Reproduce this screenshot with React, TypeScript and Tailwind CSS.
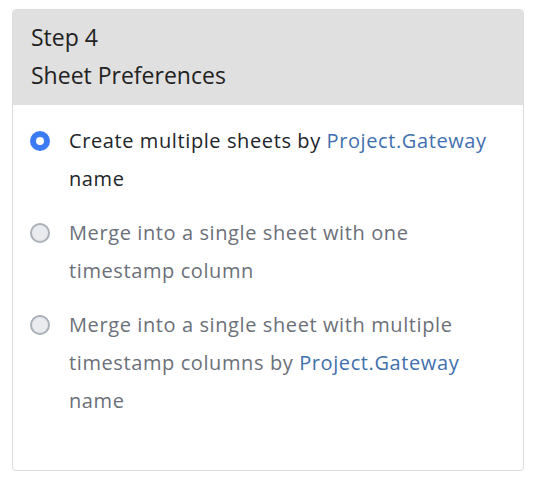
const FONT = "font-['Open_Sans',sans-serif]";

type Option = {
  id: string;
  checked?: boolean;
  parts: { text: string; link?: boolean }[];
};

const options: Option[] = [
  {
    id: "multiple",
    checked: true,
    parts: [
      { text: "Create multiple sheets by " },
      { text: "Project.Gateway", link: true },
      { text: " name" },
    ],
  },
  {
    id: "single",
    parts: [{ text: "Merge into a single sheet with one timestamp column" }],
  },
  {
    id: "single-multi",
    parts: [
      { text: "Merge into a single sheet with multiple timestamp columns by " },
      { text: "Project.Gateway", link: true },
      { text: " name" },
    ],
  },
];

function Radio({ checked }: { checked?: boolean }) {
  if (checked) {
    return (
      <span className="mt-[9px] grid size-5 shrink-0 place-items-center rounded-full bg-[#3b7cf5]">
        <span className="size-2 rounded-full bg-white" />
      </span>
    );
  }
  return (
    <span className="mt-[9px] size-5 shrink-0 rounded-full border-2 border-[#aab0b8] bg-[#e9ebef]" />
  );
}

export default function App() {
  return (
    <div className={`min-h-screen bg-white px-3 pt-[9px] ${FONT}`}>
      <div className="w-[512px] overflow-hidden rounded-[4px] border border-[#dcdcdc] bg-white">
        <div className="bg-[#e0e0e0] px-[18px] pt-[8px] pb-[11px] text-[23px] leading-[38px] text-[#222]">
          <div>Step 4</div>
          <div>Sheet Preferences</div>
        </div>
        <div className="flex flex-col gap-4 pt-[17px] pr-6 pb-[50px] pl-[17px]">
          {options.map((o) => (
            <label key={o.id} className="flex items-start gap-[19px]">
              <Radio checked={o.checked} />
              <span
                className={`text-[20px] leading-[38px] tracking-[0.6px] ${
                  o.checked ? "text-[#212529]" : "text-[#6b7079]"
                }`}
              >
                {o.parts.map((p, i) =>
                  p.link ? (
                    <span key={i} className="text-[#4170ae]">
                      {p.text}
                    </span>
                  ) : (
                    <span key={i}>{p.text}</span>
                  ),
                )}
              </span>
            </label>
          ))}
        </div>
      </div>
    </div>
  );
}
